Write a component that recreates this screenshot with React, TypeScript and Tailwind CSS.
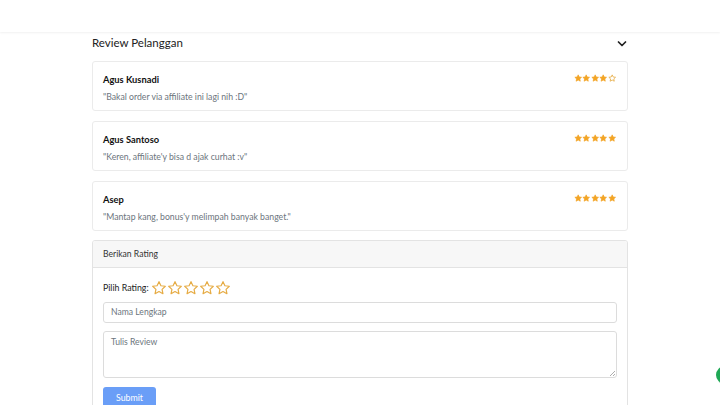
import React from 'react';

const FONT = { fontFamily: 'Lato, "Open Sans", "Liberation Sans", sans-serif' };

const reviews = [
  { name: 'Agus Kusnadi', text: '"Bakal order via affiliate ini lagi nih :D"', rating: 4 },
  { name: 'Agus Santoso', text: '"Keren, affiliate\'y bisa d ajak curhat :v"', rating: 5 },
  { name: 'Asep', text: '"Mantap kang, bonus\'y melimpah banyak banget."', rating: 5 },
];

const STAR = 'M12 2.5l2.9 6.1 6.6.8-4.9 4.6 1.3 6.6L12 17.3l-5.9 3.3 1.3-6.6-4.9-4.6 6.6-.8z';

function Star({ filled, size, stroke }: { filled: boolean; size: number; stroke?: number }) {
  return (
    <svg width={size} height={size} viewBox="0 0 24 24">
      <path
        d={STAR}
        fill={filled ? '#f3a526' : 'none'}
        stroke={filled ? '#f3a526' : '#e6ac45'}
        strokeWidth={stroke ?? 2}
        strokeLinejoin="round"
      />
    </svg>
  );
}

export default function App() {
  return (
    <div className="min-h-[405px] bg-white text-[#212529] relative overflow-hidden" style={FONT}>
      {/* navbar */}
      <div className="h-[32px] bg-white shadow-[0_1px_2px_rgba(0,0,0,0.06)]" />

      <div className="w-[536px] ml-[92px]">
        <div className="flex items-center justify-between h-[22px] mb-[7px]">
          <span className="text-[11.5px] text-[#222]">Review Pelanggan</span>
          <svg width="12" height="12" viewBox="0 0 24 24" className="mt-[2px]">
            <path d="M5 8l7 7 7-7" fill="none" stroke="#222" strokeWidth="3.5" strokeLinecap="round" strokeLinejoin="round" />
          </svg>
        </div>

        <div className="flex flex-col gap-[10px]">
          {reviews.map(r => (
            <div key={r.name} className="h-[50px] border border-[#ebebeb] rounded-[3px] px-[10px] pt-[9px] flex justify-between">
              <div>
                <div className="font-bold text-[9.3px] leading-[17px] text-[#111]">{r.name}</div>
                <div className="text-[8.7px] leading-[17px] text-[#6c757d]">{r.text}</div>
              </div>
              <div className="flex pt-[3px] pr-[1px]">
                {[0, 1, 2, 3, 4].map(i => (
                  <Star key={i} filled={i < r.rating} size={8.4} stroke={i < r.rating ? 2 : 2.4} />
                ))}
              </div>
            </div>
          ))}

          <div className="border border-[#e3e3e3] rounded-[3px] overflow-hidden -mt-[1px]">
            <div className="h-[27px] bg-[#f7f7f7] border-b border-[#e3e3e3] px-[10px] flex items-center text-[8.6px] text-[#333]">
              Berikan Rating
            </div>
            <div className="px-[10px] pt-[10px]">
              <div className="flex items-center gap-[2px] text-[8.8px] text-[#222] h-[20px]">
                <span>Pilih Rating:</span>
                <div className="flex">
                  {[0, 1, 2, 3, 4].map(i => (
                    <Star key={i} filled={false} size={16} stroke={1.8} />
                  ))}
                </div>
              </div>
              <div className="mt-[4px] h-[21px] border border-[#dcdcdc] rounded-[3px] px-[7px] flex items-center text-[8.6px] text-[#6c757d]">
                Nama Lengkap
              </div>
              <div className="mt-[8px] h-[47px] border border-[#dcdcdc] rounded-[3px] px-[7px] pt-[4px] text-[8.6px] text-[#6c757d] relative">
                Tulis Review
                <svg width="6" height="6" viewBox="0 0 6 6" className="absolute right-[1px] bottom-[1px]">
                  <path d="M6 1L1 6M6 4L4 6" stroke="#999" strokeWidth="0.8" />
                </svg>
              </div>
              <div className="mt-[9px] w-[53px] h-[22px] bg-[#6a9ef7] rounded-[3px] flex items-center justify-center text-white text-[8.8px]">
                Submit
              </div>
            </div>
          </div>
        </div>
      </div>

      {/* floating button edge */}
      <div className="absolute left-[716px] top-[366px] w-[20px] h-[18px] rounded-full bg-[#1fa855]" />
    </div>
  );
}
